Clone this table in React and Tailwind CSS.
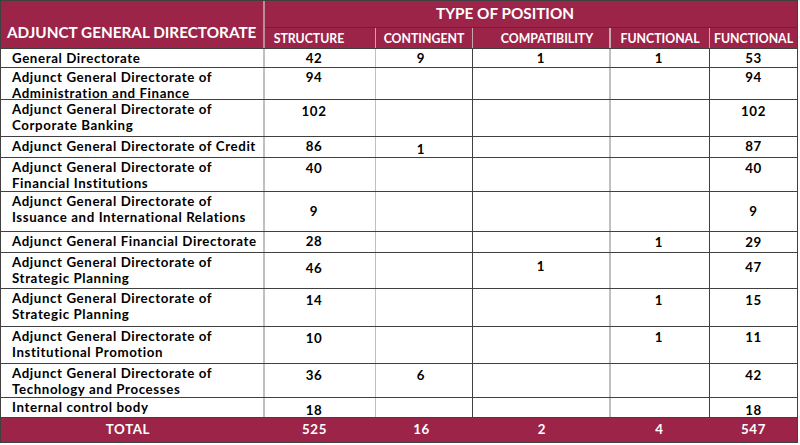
import React from "react";

const rows = [
  { label: ["General Directorate"], h: "h-[19px]", v: ["42", "9", "1", "1", "53"], pt: ["pt-[1px]", "pt-[1px]", "pt-[1px]", "pt-[1px]", "pt-[1px]"] },
  { label: ["Adjunct General Directorate of", "Administration and Finance"], h: "h-[32px]", v: ["94", "", "", "", "94"], pt: ["pt-[1px]", "", "", "", "pt-[1px]"] },
  { label: ["Adjunct General Directorate of", "Corporate Banking"], h: "h-[37px]", v: ["102", "", "", "", "102"], pt: ["pt-[3px]", "", "", "", "pt-[3px]"] },
  { label: ["Adjunct General Directorate of Credit"], h: "h-[21px]", v: ["86", "1", "", "", "87"], pt: ["pt-[1px]", "pt-[4px]", "", "", "pt-[1px]"] },
  { label: ["Adjunct General Directorate of", "Financial Institutions"], h: "h-[34px]", v: ["40", "", "", "", "40"], pt: ["pt-[2px]", "", "", "", "pt-[2px]"] },
  { label: ["Adjunct General Directorate of", "Issuance and International Relations"], h: "h-[40px]", v: ["9", "", "", "", "9"], pt: ["pt-[11px]", "", "", "", "pt-[11px]"] },
  { label: ["Adjunct General Financial Directorate"], h: "h-[21px]", v: ["28", "", "", "1", "29"], pt: ["pt-[1px]", "", "", "pt-[2px]", "pt-[2px]"] },
  { label: ["Adjunct General Directorate of", "Strategic Planning"], h: "h-[36px]", v: ["46", "", "1", "", "47"], pt: ["pt-[7px]", "", "pt-[5px]", "", "pt-[6px]"] },
  { label: ["Adjunct General Directorate of", "Strategic Planning"], h: "h-[38px]", v: ["14", "", "", "1", "15"], pt: ["pt-[3px]", "", "", "pt-[3px]", "pt-[3px]"] },
  { label: ["Adjunct General Directorate of", "Institutional Promotion"], h: "h-[37px]", v: ["10", "", "", "1", "11"], pt: ["pt-[3px]", "", "", "pt-[2px]", "pt-[2px]"] },
  { label: ["Adjunct General Directorate of", "Technology and Processes"], h: "h-[34px]", v: ["36", "6", "", "", "42"], pt: ["pt-[3px]", "pt-[3px]", "", "", "pt-[3px]"] },
  { label: ["Internal control body"], h: "h-[20px]", v: ["18", "", "", "", "18"], pt: ["pt-[4px]", "", "", "", "pt-[4px]"] },
];

const colCls = [
  "w-[111px] border-r border-[#bfbfbf] pr-[12px]",
  "w-[97px] border-r border-[#404040] pr-[6px]",
  "w-[138px] border-r-2 border-[#bfbfbf]",
  "w-[99px] border-r border-[#404040] pr-[2px]",
  "w-[87px]",
];

export default function App() {
  return (
    <div
      className="w-[800px] h-[445px] bg-white text-black"
      style={{ fontFamily: "Lato, 'Open Sans', sans-serif" }}
    >
      <div className="w-[798px] border border-[#404040] box-border">
        {/* Header */}
        <div className="flex h-[47px] bg-[#9d2449] text-white font-bold">
          <div className="w-[264px] shrink-0 border-r-2 border-[#b98d9b] flex items-end pb-[8px] pl-[6px] text-[15.3px] leading-none whitespace-nowrap">
            ADJUNCT GENERAL DIRECTORATE
          </div>
          <div className="flex-1 flex flex-col">
            <div className="h-[27px] border-b border-[#7c1a39] flex items-center justify-center pr-[52px] text-[15.3px] leading-none">
              TYPE OF POSITION
            </div>
            <div className="flex flex-1 text-[12.3px] leading-none">
              <div className="w-[111px] border-r border-[#c4a8b2] flex items-center justify-center pr-[22px] pt-[2px]">STRUCTURE</div>
              <div className="w-[97px] border-r border-[#c4a8b2] flex items-center justify-center pt-[2px]">CONTINGENT</div>
              <div className="w-[138px] border-r-2 border-[#c4a8b2] flex items-center justify-center pl-[12px] pt-[2px]">COMPATIBILITY</div>
              <div className="w-[99px] border-r border-[#c4a8b2] flex items-center justify-center pt-[2px]">FUNCTIONAL</div>
              <div className="w-[87px] flex items-center justify-center pt-[2px]">FUNCTIONAL</div>
            </div>
          </div>
        </div>

        {/* Body */}
        {rows.map((r, i) => (
          <div key={i} className={`flex ${r.h} border-t border-[#404040] font-bold text-[13.3px] leading-4 tracking-[0.6px] first:border-t-0`}>
            <div className="w-[264px] shrink-0 border-r-2 border-[#bfbfbf] pl-[11px] pt-[1px]">
              {r.label.map((l, j) => (
                <div key={j} className="whitespace-nowrap">{l}</div>
              ))}
            </div>
            {r.v.map((v, j) => (
              <div key={j} className={`${colCls[j]} shrink-0 text-center ${r.pt[j]}`}>
                {v}
              </div>
            ))}
          </div>
        ))}

        {/* Total */}
        <div className="flex h-[25px] bg-[#9d2449] text-white font-bold text-[13.3px] tracking-[0.6px] leading-none items-center border-t border-[#404040]">
          <div className="w-[264px] shrink-0 text-center pr-[10px]">TOTAL</div>
          <div className="w-[111px] shrink-0 text-center pr-[12px]">525</div>
          <div className="w-[97px] shrink-0 text-center pr-[6px]">16</div>
          <div className="w-[138px] shrink-0 text-center">2</div>
          <div className="w-[99px] shrink-0 text-center pr-[2px]">4</div>
          <div className="w-[87px] shrink-0 text-center">547</div>
        </div>
      </div>
    </div>
  );
}
